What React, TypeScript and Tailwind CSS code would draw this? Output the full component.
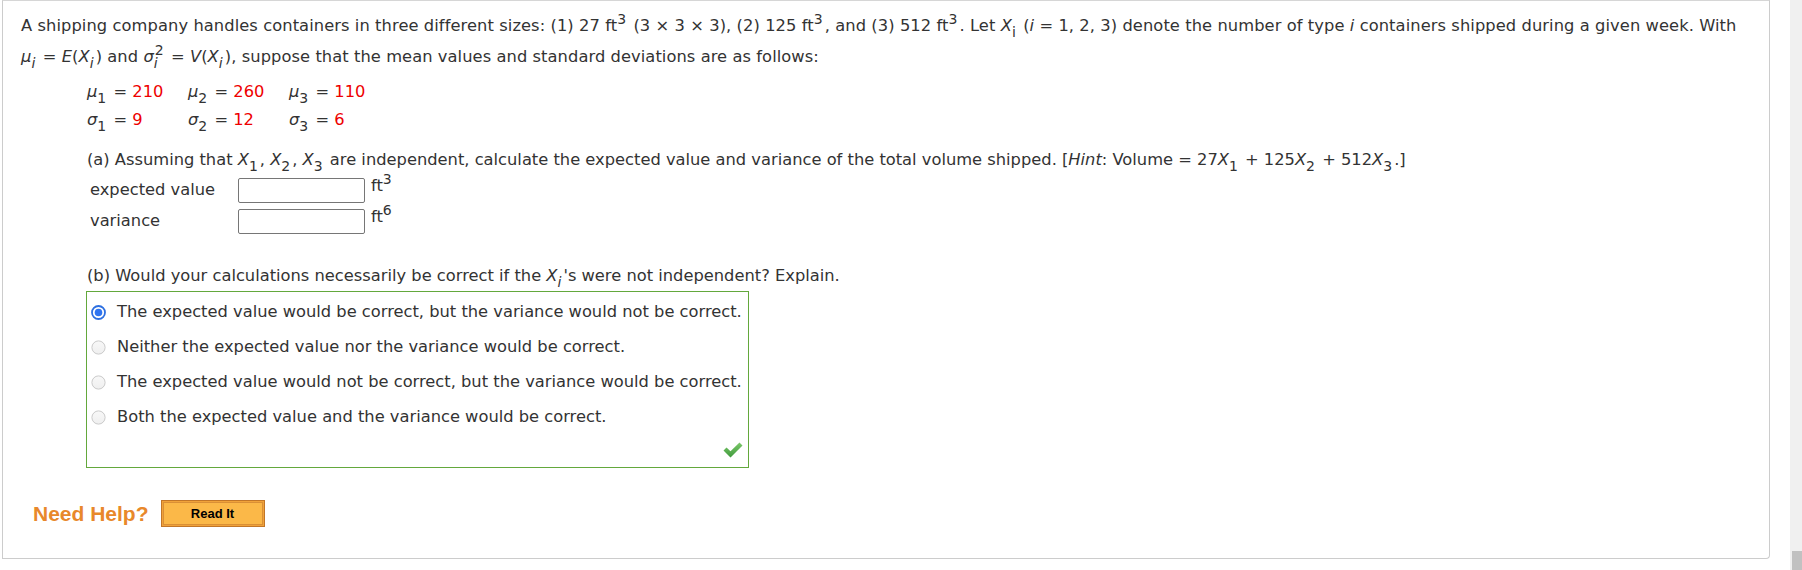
const red = "text-[#ee0000]";

function Sub({ children }: { children: React.ReactNode }) {
  return <sub className="text-[14px] bottom-[-0.4em] pr-[2px]">{children}</sub>;
}

function Sup({ children, className = "" }: { children: React.ReactNode; className?: string }) {
  return <sup className={`text-[14px] top-[-0.5em] pr-[2px] ${className}`}>{children}</sup>;
}

function Xi({ s }: { s: string }) {
  return (
    <>
      <i>X</i>
      <Sub>{s}</Sub>
    </>
  );
}

function Radio({ checked }: { checked?: boolean }) {
  if (checked) {
    return (
      <svg width="15" height="15" viewBox="0 0 15 15" className="shrink-0">
        <circle cx="7.5" cy="7.5" r="6.5" fill="#fff" stroke="#2d6fe0" strokeWidth="1.8" />
        <circle cx="7.5" cy="7.5" r="3.8" fill="#2f74f0" />
      </svg>
    );
  }
  return (
    <svg width="15" height="15" viewBox="0 0 15 15" className="shrink-0">
      <defs>
        <linearGradient id="rg" x1="0" y1="0" x2="0" y2="1">
          <stop offset="0" stopColor="#f8f8f8" />
          <stop offset="1" stopColor="#efefef" />
        </linearGradient>
      </defs>
      <circle cx="7.5" cy="7.5" r="6.6" fill="url(#rg)" stroke="#cacaca" strokeWidth="1" />
    </svg>
  );
}

function Check() {
  return (
    <svg width="20" height="16" viewBox="0 0 20 16">
      <defs>
        <linearGradient id="cg" x1="0" y1="0" x2="0" y2="1">
          <stop offset="0" stopColor="#7cc86a" />
          <stop offset="1" stopColor="#3f9a3c" />
        </linearGradient>
      </defs>
      <path d="M0.5 8.5 L3.5 5.5 L7.5 9.3 L16.5 0.5 L19.5 3.5 L7.5 15.5 Z" fill="url(#cg)" />
    </svg>
  );
}

const options = [
  "The expected value would be correct, but the variance would not be correct.",
  "Neither the expected value nor the variance would be correct.",
  "The expected value would not be correct, but the variance would be correct.",
  "Both the expected value and the variance would be correct.",
];

export default function App() {
  return (
    <div className="flex h-[570px] w-[1802px] bg-white text-[#333] text-[16.3px] font-['DejaVu_Sans',Verdana,sans-serif] overflow-hidden">
      <div className="flex-1 pl-[2px] pr-[20px]">
        <div className="h-[559px] border border-t-[#d6d6d6] border-[#cccccc] rounded-br-[4px] pt-[9px] pl-[18px]">
          <div className="whitespace-nowrap leading-[31px] tracking-[0.08px]">
            A shipping company handles containers in three different sizes: (1) 27 ft<Sup>3</Sup> (3 × 3 × 3), (2) 125 ft
            <Sup>3</Sup>, and (3) 512 ft<Sup>3</Sup>. Let <Xi s="i" /> (<i>i</i> = 1, 2, 3) denote the number of type{" "}
            <i>i</i> containers shipped during a given week. With
          </div>
          <div className="whitespace-nowrap leading-[31px] tracking-[0.07px]">
            <i>μ</i>
            <Sub>
              <i>i</i>
            </Sub>{" "}
            = <i>E</i>(<i>X</i>
            <Sub>
              <i>i</i>
            </Sub>
            ) and <i>σ</i>
            <sub className="text-[14px] bottom-[-0.4em]">
              <i>i</i>
            </sub>
            <Sup className="-ml-[3px]">2</Sup> = <i>V</i>(<i>X</i>
            <Sub>
              <i>i</i>
            </Sub>
            ), suppose that the mean values and standard deviations are as follows:
          </div>

          <div className="ml-[66px] mt-[6px] grid grid-cols-[101px_101px_101px] leading-[28px]">
            <div>
              <i>μ</i>
              <Sub>1</Sub> = <span className={red}>210</span>
            </div>
            <div>
              <i>μ</i>
              <Sub>2</Sub> = <span className={red}>260</span>
            </div>
            <div>
              <i>μ</i>
              <Sub>3</Sub> = <span className={red}>110</span>
            </div>
            <div>
              <i>σ</i>
              <Sub>1</Sub> = <span className={red}>9</span>
            </div>
            <div>
              <i>σ</i>
              <Sub>2</Sub> = <span className={red}>12</span>
            </div>
            <div>
              <i>σ</i>
              <Sub>3</Sub> = <span className={red}>6</span>
            </div>
          </div>

          <div className="ml-[66px] mt-[12px] leading-[28px] whitespace-nowrap">
            (a) Assuming that <Xi s="1" />, <Xi s="2" />, <Xi s="3" /> are independent, calculate the expected value and
            variance of the total volume shipped. [<i>Hint</i>: Volume = 27<Xi s="1" /> + 125<Xi s="2" /> + 512
            <Xi s="3" />
            .]
          </div>

          <div className="ml-[69px] mt-[4px] flex flex-col gap-[6px]">
            <div className="flex items-center h-[25px]">
              <span className="w-[148px]">expected value</span>
              <input className="w-[127px] h-[25px] border border-[#767676] rounded-[2px] bg-white" />
              <span className="ml-[6px] self-start -mt-[4px]">
                ft<Sup>3</Sup>
              </span>
            </div>
            <div className="flex items-center h-[25px]">
              <span className="w-[148px]">variance</span>
              <input className="w-[127px] h-[25px] border border-[#767676] rounded-[2px] bg-white" />
              <span className="ml-[6px] self-start -mt-[4px]">
                ft<Sup>6</Sup>
              </span>
            </div>
          </div>

          <div className="ml-[66px] mt-[28px] leading-[28px] whitespace-nowrap">
            (b) Would your calculations necessarily be correct if the <i>X</i>
            <Sub>
              <i>i</i>
            </Sub>
            's were not independent? Explain.
          </div>

          <div className="ml-[65px] mt-[1px] w-[663px] h-[177px] border border-[#63a83c] pt-[3px] pl-[4px] pr-[5px] flex flex-col">
            {options.map((o, i) => (
              <div key={i} className="h-[35px] flex items-center gap-[11px] whitespace-nowrap">
                <Radio checked={i === 0} />
                <span>{o}</span>
              </div>
            ))}
            <div className="mt-[7px] flex justify-end">
              <Check />
            </div>
          </div>

          <div className="ml-[12px] mt-[30px] flex items-center gap-[12px]">
            <span className="font-['Liberation_Sans',Arial,sans-serif] font-bold text-[21px] text-[#e8882b]">
              Need Help?
            </span>
            <button className="w-[104px] h-[27px] border border-[#c27628] bg-[#f0a23a] p-[1px]">
              <span className="flex h-full w-full items-center justify-center border border-[#d98f36] bg-[#fbb848] font-['Liberation_Sans',Arial,sans-serif] font-bold text-[13px] text-black">
                Read It
              </span>
            </button>
          </div>
        </div>
      </div>
      <div className="w-[12px] bg-[#f0f0f0] flex flex-col justify-end">
        <div className="h-[19px] ml-[2px] bg-[#c1c1c1]" />
      </div>
    </div>
  );
}
